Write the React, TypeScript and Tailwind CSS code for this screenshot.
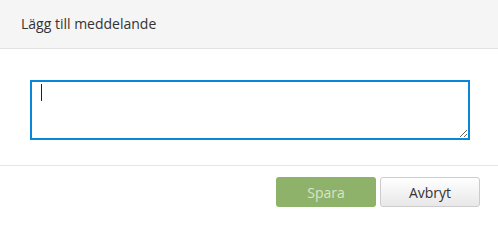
export default function App() {
  return (
    <div className="w-[498px] h-[211px] bg-white font-['Open_Sans',sans-serif] text-[#333]">
      <div className="h-[49px] bg-[#f5f5f5] border-b border-[#e2e2e2] flex items-center px-[21px]">
        <h3 className="text-[14px] leading-[20px] font-normal">Lägg till meddelande</h3>
      </div>
      <div className="pt-[31px] pb-[25px] px-[30px]">
        <div className="relative">
          <textarea
            className="block w-[440px] h-[60px] border-2 border-[#0a86d8] outline-none px-[9px] py-[2px] text-[14px] caret-transparent"
            readOnly
          />
          <span className="absolute left-[11px] top-[4px] w-px h-[17px] bg-[#222]" />
        </div>
      </div>
      <div className="border-t border-[#e5e5e5] flex justify-end gap-[4px] pt-[11px] pr-[18px]">
        <button className="w-[100px] h-[30px] rounded-[3px] bg-[#8fb26b] text-[#d7e5c8] text-[14px]">
          Spara
        </button>
        <button className="w-[100px] h-[30px] rounded-[3px] border border-[#cccccc] bg-gradient-to-b from-white to-[#e8e8e8] text-[#333] text-[14px]">
          Avbryt
        </button>
      </div>
    </div>
  );
}
